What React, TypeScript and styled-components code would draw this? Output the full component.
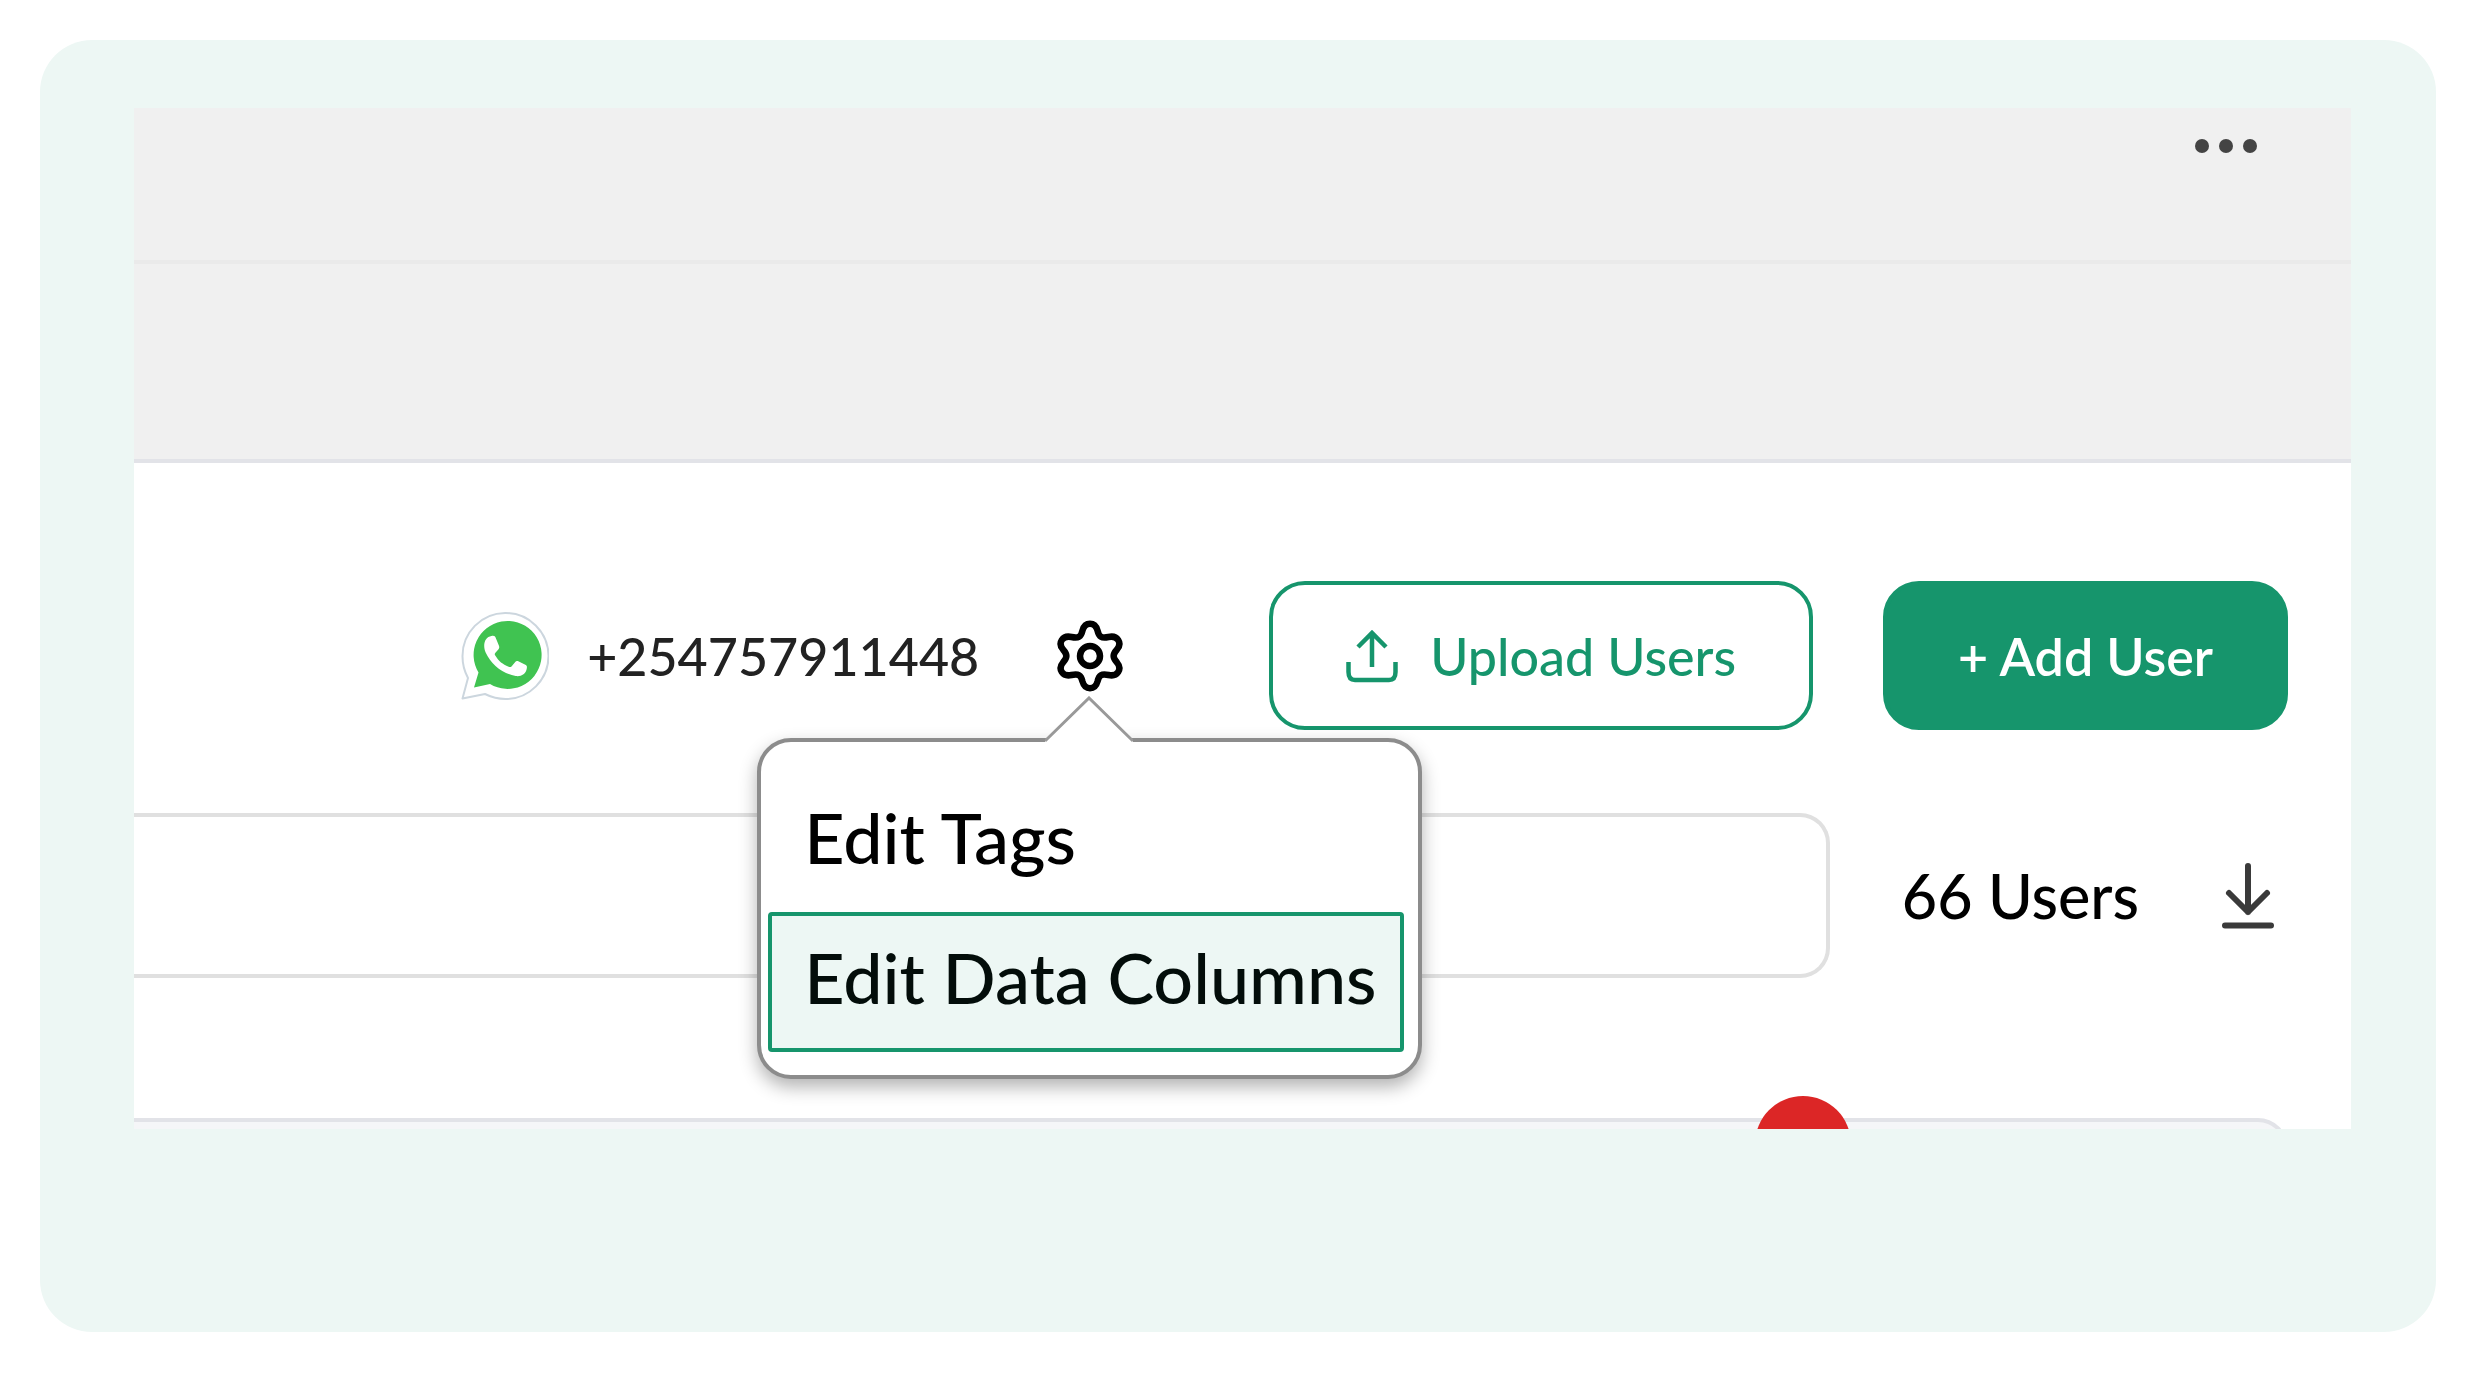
import React from "react";
import styled, { createGlobalStyle } from "styled-components";

const green = "#16956c";
const mint = "#edf7f4";

const Global = createGlobalStyle`
  *, *::before, *::after { box-sizing: border-box; }
  body { margin: 0; background: #fff; font-family: Lato, "Open Sans", sans-serif; color: #000; }
  button, input { font-family: inherit; margin: 0; }
`;

const Page = styled.main`
  padding: 40px;
`;

const Card = styled.section`
  padding: 68px 85px 203px 94px;
  border-radius: 52px;
  background: ${mint};
`;

const Window = styled.div`
  overflow: hidden;
  background: #fff;
`;

const TitleBar = styled.header`
  display: flex;
  justify-content: flex-end;
  height: 156px;
  padding: 24px 93px;
  border-bottom: 4px solid #eaeaea;
  background: #f0f0f0;
`;

const IconButton = styled.button`
  display: flex;
  align-self: flex-start;
  padding: 0;
  border: 0;
  background: none;
  cursor: pointer;
`;

const SubBar = styled.div`
  height: 199px;
  border-bottom: 4px solid #e2e3e8;
  background: #f0f0f0;
`;

const Content = styled.div`
  display: flex;
  flex-direction: column;
  padding: 118px 63px 0 0;
`;

const Toolbar = styled.div`
  display: flex;
  align-items: center;
  justify-content: flex-end;
`;

const Account = styled.div`
  display: flex;
  align-items: center;
  gap: 38px;
  margin-right: 78px;
  color: #222;
  font-size: 52px;
  font-weight: 500;
  line-height: 64px;
`;

const MenuAnchor = styled.div`
  position: relative;
  display: flex;
  margin-right: 146px;
`;

const Popover = styled.div`
  position: absolute;
  z-index: 2;
  top: 118px;
  left: -300px;
  width: 665px;
  padding: 30px 14px 23px 7px;
  border: 4px solid #8c8c8c;
  border-radius: 34px;
  background: #fff;
  box-shadow: 0 8px 18px rgba(0, 0, 0, 0.3);
`;

const Pointer = styled.svg`
  position: absolute;
  top: -46px;
  left: 284px;
`;

const MenuItem = styled.button<{ $active?: boolean }>`
  display: block;
  width: 100%;
  height: 140px;
  padding: 0 32px 10px;
  border: 4px solid ${(p) => (p.$active ? green : "transparent")};
  border-radius: 4px;
  background: ${(p) => (p.$active ? mint : "transparent")};
  color: ${(p) => (p.$active ? "#030d0a" : "#000")};
  font-size: 70px;
  font-weight: 500;
  line-height: 84px;
  text-align: left;
  white-space: nowrap;
  cursor: pointer;
`;

const ActionButton = styled.button<{ $solid?: boolean }>`
  display: flex;
  align-items: center;
  justify-content: center;
  gap: 32px;
  height: 149px;
  padding: 0 ${(p) => (p.$solid ? 71 : 73)}px;
  border: 4px solid ${green};
  border-radius: 36px;
  background: ${(p) => (p.$solid ? green : "#fff")};
  color: ${(p) => (p.$solid ? "#fff" : green)};
  font-size: 52px;
  font-weight: ${(p) => (p.$solid ? 600 : 500)};
  line-height: 64px;
  white-space: nowrap;
  cursor: pointer;
`;

const Actions = styled.div`
  display: flex;
  gap: 70px;
`;

const SearchRow = styled.div`
  display: flex;
  align-items: center;
  margin-top: 83px;
`;

const Search = styled.input`
  flex: 1;
  min-width: 0;
  height: 165px;
  padding: 0 40px;
  border: 4px solid #e0e0e0;
  border-left: 0;
  border-radius: 0 30px 30px 0;
  background: #fff;
  font-size: 52px;
`;

const Count = styled.span`
  margin: 0 83px 0 72px;
  font-size: 61px;
  font-weight: 500;
  line-height: 76px;
`;

const DownloadButton = styled(IconButton)`
  align-self: center;
  margin-right: 14px;
`;

const TablePeek = styled.div`
  position: relative;
  height: 11px;
  margin-top: 140px;
`;

const TableHead = styled.div`
  height: 80px;
  border: 4px solid #e2e3e8;
  border-left: 0;
  border-radius: 0 30px 0 0;
  background: #f5f6f8;
`;

const Badge = styled.span`
  position: absolute;
  top: -22px;
  right: 437px;
  width: 96px;
  height: 96px;
  border-radius: 50%;
  background: #dc2626;
`;

function WhatsAppLogo() {
  return (
    <svg width="88" height="88" viewBox="0 0 88 88" aria-hidden="true">
      <path
        d="M1.500 86.500 7 66C3.500 59.500 1.500 52 1.500 44.500A43 43 0 1 1 44.500 87C37 87 31 85.500 24 82Z"
        fill="#fff"
        stroke="#ccd6de"
        strokeWidth="2"
        strokeLinejoin="round"
      />
      <path d="M13 75.500 17.500 60.500A34 34 0 1 1 29 72Z" fill="#40c351" />
      <path
        transform="translate(23 24) scale(.88)"
        d="M8.500 0C11.500-.5 12.500 0 13.500 2.500L17 11C17.500 12.500 17.500 13.500 16.500 15L13 19C12 20 12 21 12.800 22.200C17 29 21 32 28 35C29.500 35.600 30.500 35.500 31.500 34.300L35.500 29.500C36.500 28.300 37.500 28.200 39 28.800L47 32.700C49 33.700 49 34.500 48.500 37.500C47.500 43 42 46.500 36 45.500C21 43 8 32 2 19C-2 10 1 1 8.500 0Z"
        fill="#fff"
      />
    </svg>
  );
}

function GearIcon() {
  return (
    <svg width="66" height="72" viewBox="0 0 66 72" fill="none" stroke="#000" strokeWidth="6.500" strokeLinejoin="round" aria-hidden="true">
      <path d="M25.500 10.500C28 1.500 38 1.500 40.500 10.500C42 17 44.500 18.500 51.500 17C60.500 15 65.500 23 60 29.500C55.500 34.500 55.500 37.500 60 42.500C65.500 49 60.500 57 51.500 55C44.500 53.500 42 55 40.500 61.500C38 70.500 28 70.500 25.500 61.500C24 55 21.500 53.500 14.500 55C5.500 57 .5 49 6 42.500C10.500 37.500 10.500 34.500 6 29.500C.5 23 5.500 15 14.500 17C21.500 18.500 24 17 25.500 10.500Z" />
      <circle cx="33" cy="36" r="10" />
    </svg>
  );
}

function UploadIcon() {
  return (
    <svg width="52" height="54" viewBox="0 0 52 54" fill="none" stroke="currentColor" strokeWidth="4.500" aria-hidden="true">
      <path d="M26 38V4M12 18 26 4 40 18" />
      <path d="M2.500 33V43Q2.500 51 9 51H43Q49.500 51 49.500 43V33" />
    </svg>
  );
}

function DownloadIcon() {
  return (
    <svg width="52" height="66" viewBox="0 0 52 66" fill="none" stroke="#3a3a3a" strokeWidth="6" strokeLinecap="round" strokeLinejoin="round" aria-hidden="true">
      <path d="M26 3V49M7 30 26 49 45 30M3 62.500H49" />
    </svg>
  );
}

function MoreIcon() {
  return (
    <svg width="64" height="28" viewBox="0 0 64 28" fill="#444" aria-hidden="true">
      <circle cx="8" cy="14" r="7" />
      <circle cx="32" cy="14" r="7" />
      <circle cx="56" cy="14" r="7" />
    </svg>
  );
}

export default function App() {
  return (
    <>
      <Global />
      <Page>
        <Card>
          <Window>
            <TitleBar>
              <IconButton aria-label="More options"><MoreIcon /></IconButton>
            </TitleBar>
            <SubBar />
            <Content>
              <Toolbar>
                <Account>
                  <WhatsAppLogo />
                  <span>+254757911448</span>
                </Account>
                <MenuAnchor>
                  <IconButton aria-label="Settings" aria-expanded="true"><GearIcon /></IconButton>
                  <Popover>
                    <Pointer width="88" height="47" viewBox="0 0 88 47" aria-hidden="true">
                      <path d="M0 47V45L44 2 88 45V47Z" fill="#fff" />
                      <path d="M0 45 44 2 88 45" fill="none" stroke="#999" strokeWidth="3" />
                    </Pointer>
                    <MenuItem>Edit Tags</MenuItem>
                    <MenuItem $active>Edit Data Columns</MenuItem>
                  </Popover>
                </MenuAnchor>
                <Actions>
                  <ActionButton><UploadIcon />Upload Users</ActionButton>
                  <ActionButton $solid>+ Add User</ActionButton>
                </Actions>
              </Toolbar>
              <SearchRow>
                <Search type="search" aria-label="Search users" />
                <Count>66 Users</Count>
                <DownloadButton aria-label="Download users"><DownloadIcon /></DownloadButton>
              </SearchRow>
              <TablePeek>
                <TableHead />
                <Badge />
              </TablePeek>
            </Content>
          </Window>
        </Card>
      </Page>
    </>
  );
}
